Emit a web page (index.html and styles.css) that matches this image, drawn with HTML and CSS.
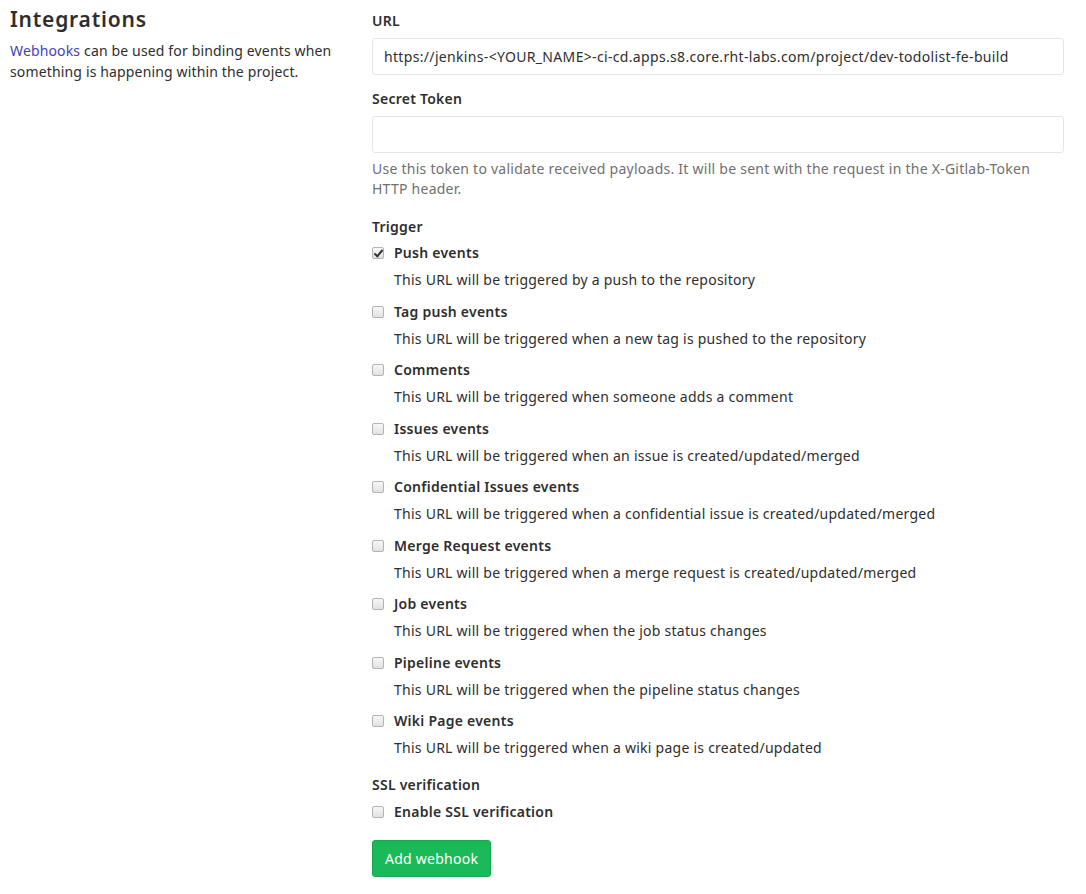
FILE: index.html
```html
<!DOCTYPE html>
<html>
<head>
<meta charset="utf-8">
<link rel="stylesheet" href="styles.css">
</head>
<body>
<div class="page">
  <div class="intro">
    <h4 class="title">Integrations</h4>
    <p class="lead"><a href="#" class="link">Webhooks</a> can be used for binding events when something is happening within the project.</p>
  </div>
  <form class="form">
    <div class="group">
      <label class="label">URL</label>
      <input class="input url" type="text" value="https://jenkins-&lt;YOUR_NAME&gt;-ci-cd.apps.s8.core.rht-labs.com/project/dev-todolist-fe-build">
    </div>
    <div class="group">
      <label class="label">Secret Token</label>
      <input class="input" type="text" value="">
      <p class="help">Use this token to validate received payloads. It will be sent with the request in the X-Gitlab-Token HTTP header.</p>
    </div>
    <div class="group trigger">
      <label class="label">Trigger</label>
      <ul class="options">
        <li class="option"><label class="check"><input class="box" type="checkbox" checked><span class="name">Push events</span></label><p class="desc">This URL will be triggered by a push to the repository</p></li>
        <li class="option"><label class="check"><input class="box" type="checkbox"><span class="name">Tag push events</span></label><p class="desc">This URL will be triggered when a new tag is pushed to the repository</p></li>
        <li class="option"><label class="check"><input class="box" type="checkbox"><span class="name">Comments</span></label><p class="desc">This URL will be triggered when someone adds a comment</p></li>
        <li class="option"><label class="check"><input class="box" type="checkbox"><span class="name">Issues events</span></label><p class="desc">This URL will be triggered when an issue is created/updated/merged</p></li>
        <li class="option"><label class="check"><input class="box" type="checkbox"><span class="name">Confidential Issues events</span></label><p class="desc">This URL will be triggered when a confidential issue is created/updated/merged</p></li>
        <li class="option"><label class="check"><input class="box" type="checkbox"><span class="name">Merge Request events</span></label><p class="desc">This URL will be triggered when a merge request is created/updated/merged</p></li>
        <li class="option"><label class="check"><input class="box" type="checkbox"><span class="name">Job events</span></label><p class="desc">This URL will be triggered when the job status changes</p></li>
        <li class="option"><label class="check"><input class="box" type="checkbox"><span class="name">Pipeline events</span></label><p class="desc">This URL will be triggered when the pipeline status changes</p></li>
        <li class="option"><label class="check"><input class="box" type="checkbox"><span class="name">Wiki Page events</span></label><p class="desc">This URL will be triggered when a wiki page is created/updated</p></li>
      </ul>
    </div>
    <div class="group ssl">
      <label class="label">SSL verification</label>
      <label class="check"><input class="box" type="checkbox"><span class="name">Enable SSL verification</span></label>
    </div>
    <button type="button" class="btn">Add webhook</button>
  </form>
</div>
</body>
</html>
```

FILE: styles.css
```css
* { box-sizing: border-box; }
html, body { margin: 0; padding: 0; background: #fff; }
body {
  font-family: "Noto Sans", "DejaVu Sans", sans-serif;
  font-size: 14px;
  line-height: 20px;
  letter-spacing: 0.25px;
  color: #2e2e2e;
}
.page {
  display: grid;
  grid-template-columns: 362px 692px;
  padding-left: 10px;
  padding-top: 8px;
}
.intro { padding-right: 20px; }
.title {
  margin: -1px 0 9px;
  font-size: 21px;
  line-height: 24px;
  letter-spacing: 0.8px;
  font-weight: 600;
  color: #2e2e2e;
}
.lead { margin: 0; line-height: 21px; letter-spacing: 0.15px; }
.link { color: #3f3fc2; text-decoration: none; }
.form { margin: 0; }
.group { margin-bottom: 14px; }
.label {
  display: block;
  font-weight: 600;
  margin-bottom: 7px;
  margin-top: 3px;
}
.input {
  display: block;
  width: 100%;
  height: 37px;
  border: 1px solid #e5e5e5;
  border-radius: 3px;
  padding: 0 11px;
  font-family: inherit;
  font-size: 14px;
  letter-spacing: 0.25px;
  color: #2e2e2e;
  background: #fff;
  outline: none;
}
.url { letter-spacing: 0.33px; }
.help {
  margin: 6px 0 0;
  color: #707070;
}
.trigger { margin-top: 18px; margin-bottom: 0; }
.trigger .label { margin-bottom: 4px; }
.options { list-style: none; margin: 0; padding: 0; }
.option { margin-bottom: 9.5px; }
.check {
  display: flex;
  align-items: center;
  font-weight: 600;
  line-height: 24px;
}
.box {
  -webkit-appearance: none;
  appearance: none;
  position: relative;
  margin: 0 10px 0 0;
  width: 12px;
  height: 12px;
  border: 1px solid #b3b3b3;
  border-radius: 2px;
  background: linear-gradient(#f7f7f7, #e2e2e2);
  flex: none;
}
.box:checked::after {
  content: "";
  position: absolute;
  left: 3px;
  top: 0px;
  width: 3px;
  height: 7px;
  border-right: 2px solid #333;
  border-bottom: 2px solid #333;
  transform: rotate(40deg);
}
.desc { margin: 5px 0 0 22px; line-height: 20px; }
.ssl { margin-top: 17px; margin-bottom: 0; }
.ssl .label { margin-bottom: 5px; }
.btn {
  margin-top: 16px;
  display: block;
  height: 37px;
  padding: 0 12px;
  background: #1aba58;
  border: 1px solid #17a84f;
  border-radius: 3px;
  color: #fff;
  font-family: inherit;
  font-size: 14px;
  letter-spacing: 0.25px;
}
```
